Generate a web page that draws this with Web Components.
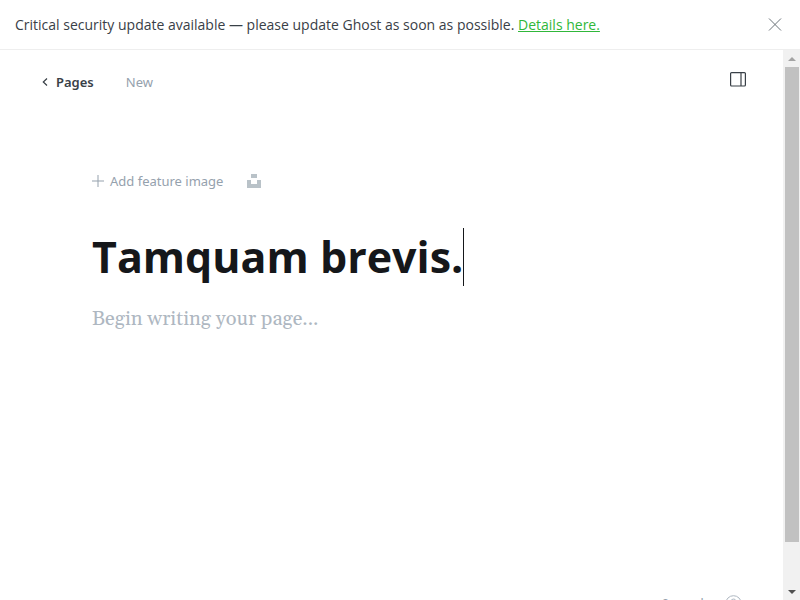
<!DOCTYPE html>
<html lang="en">
<head>
<meta charset="utf-8">
<title>New page</title>
<style>
html, body { height: 100%; }
body { margin: 0; overflow: hidden; background: #fff; color: #394047; font: 14px/20px "Noto Sans", "Open Sans", sans-serif; }
</style>
</head>
<body>
<ghost-app>
  <alert-banner slot="alert">Critical security update available — please update Ghost as soon as possible. <a href="#update">Details here.</a></alert-banner>
  <editor-header slot="page"></editor-header>
  <page-editor slot="page"></page-editor>
  <word-status slot="page"></word-status>
  <scroll-track slot="scroll"></scroll-track>
</ghost-app>
<script>
const define = (name, html) => customElements.define(name, class extends HTMLElement {
  constructor() {
    super();
    this.attachShadow({ mode: "open" }).innerHTML =
      `<style>:host,*{box-sizing:border-box}button{border:0;padding:0;background:none;font:inherit;color:inherit;cursor:pointer}svg{display:block}</style>` + html;
  }
});

define("ghost-app", `
<style>
:host { display: flex; flex-direction: column; height: 100vh; }
.body { flex: 1; min-height: 0; display: flex; }
.view { flex: 1; min-width: 0; overflow: hidden; }
.page { height: calc(100% + 24px); display: flex; flex-direction: column; }
</style>
<slot name="alert"></slot>
<div class="body">
  <main class="view"><div class="page"><slot name="page"></slot></div></main>
  <slot name="scroll"></slot>
</div>`);

define("alert-banner", `
<style>
:host { display: flex; align-items: center; justify-content: space-between; height: 50px; padding: 0 18px 0 15px; border-bottom: 1px solid #eee; font-family: "Open Sans", sans-serif; font-size: 14px; }
::slotted(a) { color: #30b73a; }
svg { stroke: #6b7278; fill: none; }
</style>
<span><slot></slot></span>
<button aria-label="Close"><svg width="14" height="14" viewBox="0 0 14 14"><path d="M1 .5l12 12M13 .5L1 12.500"/></svg></button>`);

define("editor-header", `
<style>
:host { display: flex; align-items: center; height: 64px; padding: 0 37px 0 42px; font-size: 13px; }
.back { display: flex; align-items: center; gap: 8px; color: #394047; text-decoration: none; font-weight: 600; }
.state { margin-left: 32px; color: #95a1ad; }
button { margin-left: auto; padding-bottom: 6px; }
svg { fill: none; stroke: #394047; }
</style>
<a class="back" href="#pages"><svg width="6" height="8" viewBox="0 0 6 8"><path stroke-width="1.2" d="M5 .5L1.3 4 5 7.5"/></svg>Pages</a>
<span class="state">New</span>
<button aria-label="Settings"><svg width="16" height="15" viewBox="0 0 16 15"><rect x=".6" y=".6" width="14.8" height="13.4" rx="1" stroke-width="1.2"/><path stroke-width="1.2" d="M11 1v13"/></svg></button>`);

define("page-editor", `
<style>
:host { flex: 1; display: flex; flex-direction: column; padding: 57px 92px 0; }
.tools { display: flex; align-items: center; gap: 24px; height: 20px; font-size: 13px; color: #95a1ad; }
.add { display: flex; align-items: center; gap: 6px; }
.title { display: flex; align-items: center; height: 58px; margin-top: 37px; }
input, textarea { border: 0; padding: 0; margin: 0; outline: 0; background: none; display: block; resize: none; }
input { field-sizing: content; height: 58px; font: 700 43px/58px "Open Sans", sans-serif; color: #15171a; }
.caret { width: 1px; height: 58px; background: #15171a; }
textarea { width: 100%; height: 32px; margin-top: 17px; font: 20px/32px Georgia, Gelasio, "Liberation Serif", serif; overflow: hidden; }
textarea::placeholder { color: #aeb7c1; opacity: 1; }
</style>
<div class="tools">
  <button class="add"><svg width="12" height="12" viewBox="0 0 12 12"><path stroke="#95a1ad" d="M6 0v12M0 6h12"/></svg>Add feature image</button>
  <button aria-label="Unsplash"><svg width="14" height="14" viewBox="0 0 14 14" fill="#b9c2c8"><path d="M4 0h6v4H4zM0 6h4v4h6V6h4v8H0z"/></svg></button>
</div>
<div class="title"><input aria-label="Title" value="Tamquam brevis."><span class="caret"></span></div>
<textarea aria-label="Page content" placeholder="Begin writing your page..."></textarea>`);

define("word-status", `
<style>
:host { display: flex; align-items: center; justify-content: flex-end; gap: 15px; height: 42px; padding: 0 41px 0 0; font-size: 13px; color: #95a1ad; }
svg { fill: none; stroke: #aeb7c1; }
</style>
<span>0 words</span>
<button aria-label="Help"><svg width="17" height="17" viewBox="0 0 17 17"><circle cx="8.5" cy="8.5" r="7.8"/><path d="M6 6.5a2.5 2.5 0 1 1 3.5 2.3q-1 .5-1 1.7M8.5 12v1"/></svg></button>`);

define("scroll-track", `
<style>
:host { display: flex; flex-direction: column; width: 17px; padding: 0 1px 0 2px; background: #f1f1f1; }
button { height: 17px; display: grid; place-items: center; }
.track { flex: 1; }
.thumb { height: 92%; background: #c1c1c1; }
</style>
<button aria-label="Scroll up"><svg width="8" height="4" viewBox="0 0 8 4"><path fill="#a3a3a3" d="M4 0l4 4H0z"/></svg></button>
<div class="track"><div class="thumb"></div></div>
<button aria-label="Scroll down"><svg width="8" height="4" viewBox="0 0 8 4"><path fill="#505050" d="M0 0h8L4 4z"/></svg></button>`);
</script>
</body>
</html>
